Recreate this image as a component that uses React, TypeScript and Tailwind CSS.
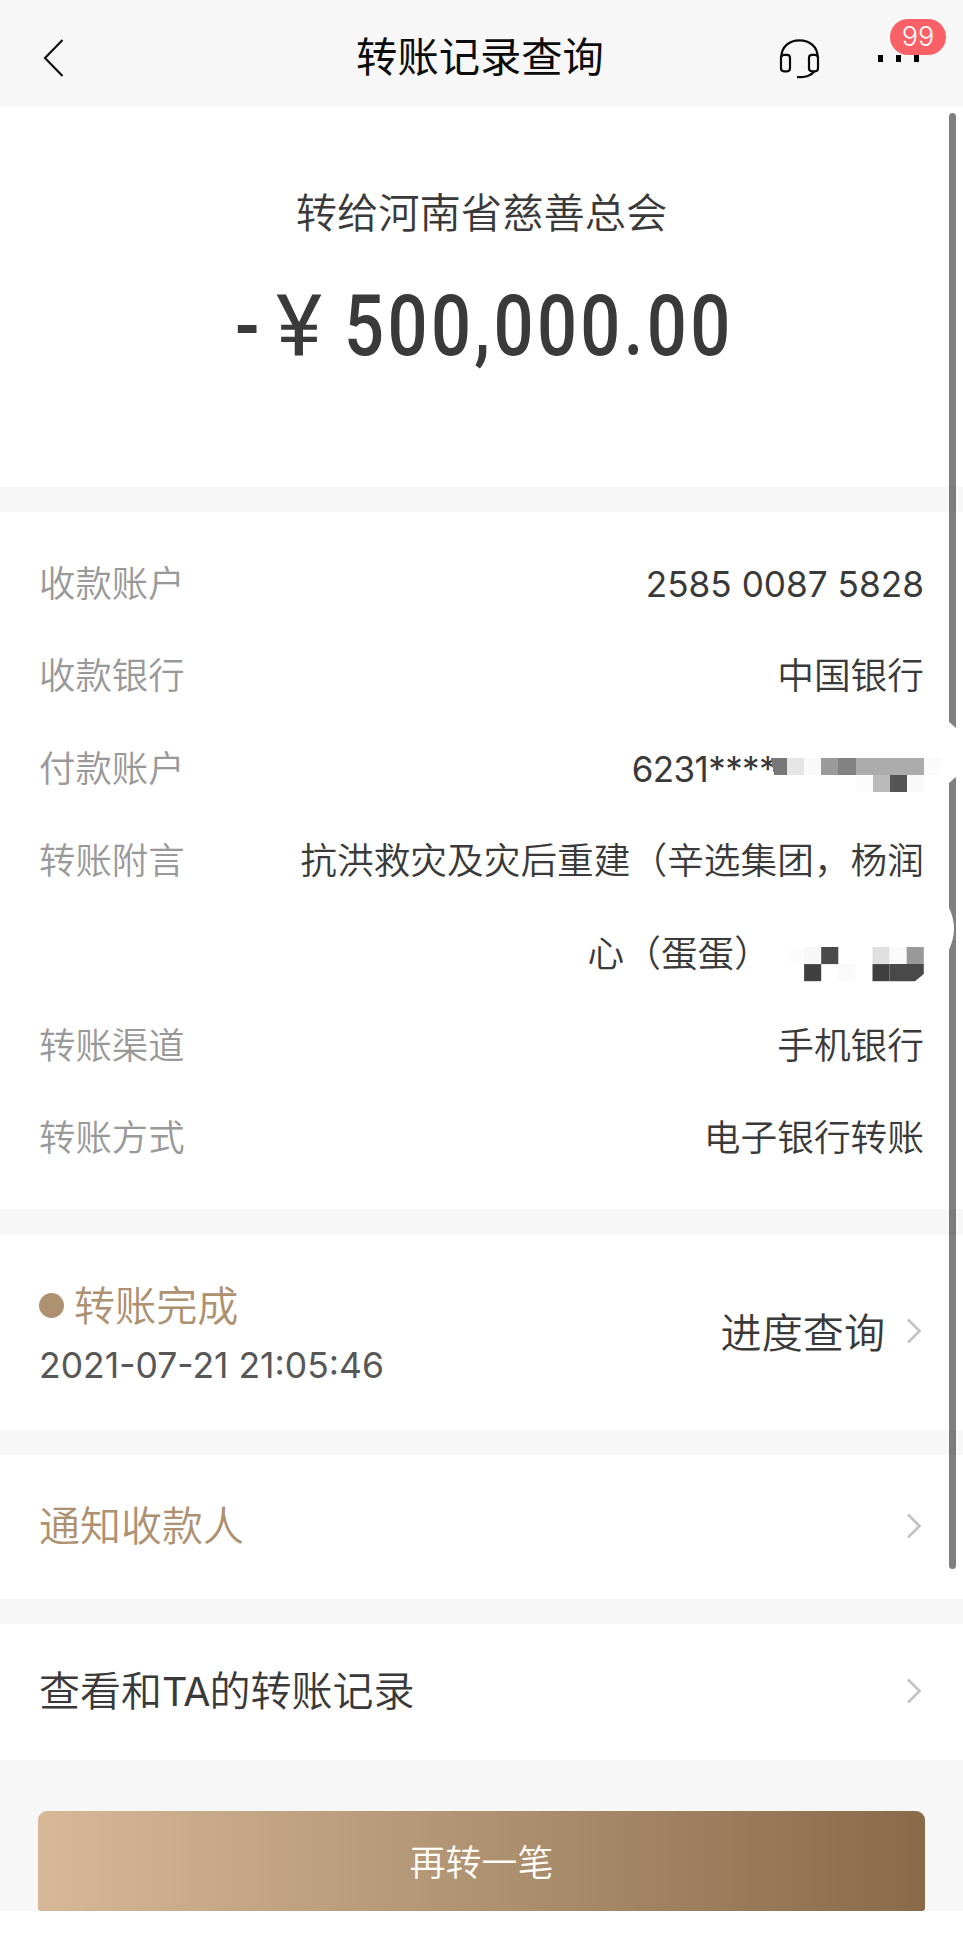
import React from 'react';

interface DetailRowProps {
  label: string;
  children: React.ReactNode;
}

interface Tile {
  x: number;
  y: number;
  w?: number;
  fill: string;
}

const TILE = 17.1;

const accountTiles: Tile[] = [
  { x: 1, y: 0, fill: '#e5e5e5' },
  { x: 2, y: 0, fill: '#f9f9f9' },
  { x: 3, y: 0, fill: '#9b9b9b' },
  { x: 4, y: 0, fill: '#828282' },
  { x: 5, y: 0, w: 4, fill: '#acacac' },
  { x: 9, y: 0, fill: '#fbfbfb' },
  { x: 5, y: 1, fill: '#fcfcfc' },
  { x: 6, y: 1, fill: '#bababa' },
  { x: 7, y: 1, fill: '#555555' },
  { x: 8, y: 1, fill: '#f9f9f9' },
];

const remarkTiles: Tile[] = [
  { x: 0, y: 0, fill: '#fcfcfc' },
  { x: 1, y: 0, fill: '#f7f7f7' },
  { x: 2, y: 0, fill: '#4a4a4a' },
  { x: 5, y: 0, fill: '#e0e0e0' },
  { x: 6, y: 0, fill: '#fafafa' },
  { x: 7, y: 0, fill: '#999999' },
  { x: 1, y: 1, fill: '#404040' },
  { x: 3, y: 1, fill: '#fafafa' },
  { x: 5, y: 1, fill: '#3f3f3f' },
];

const Tiles: React.FC<{ tiles: Tile[] }> = ({ tiles }) => (
  <>
    {tiles.map((t) => (
      <rect
        key={`${t.x}-${t.y}`}
        x={t.x * TILE}
        y={t.y * TILE}
        width={(t.w ?? 1) * TILE}
        height={TILE}
        fill={t.fill}
      />
    ))}
  </>
);

const Chevron = () => (
  <svg width="18" height="28" viewBox="0 0 18 28" fill="none" stroke="#c4c4c4" strokeWidth="2.8" className="shrink-0 mb-[3px]">
    <path d="M2 2.5 L13.5 14 L2 25.5" />
  </svg>
);

const Headset = () => (
  <svg width="42" height="42" viewBox="0 0 42 42" fill="none" stroke="#0a0a0a" strokeWidth="2.2">
    <path d="M2.4 19 C2.4 9 10 2.3 20.5 2.3 C31 2.3 38.6 9 38.6 19" />
    <rect x="2" y="16.8" width="9" height="16.5" rx="3" />
    <rect x="30" y="16.8" width="9" height="16.5" rx="3" />
    <path d="M35.5 33 C32 38 27 39.2 18 39.2" />
  </svg>
);

const DetailRow: React.FC<DetailRowProps> = ({ label, children }) => (
  <div className="flex justify-between">
    <span className="text-[#999999] text-[36.4px]">{label}</span>
    <span className="relative text-right">{children}</span>
  </div>
);

const App: React.FC = () => {
  return (
    <div className="relative w-full h-[1948px] overflow-hidden bg-white text-[#3a3a3a] font-['Inter','Noto_Sans_CJK_SC',sans-serif] font-[350]">
      {/* Header */}
      <header className="h-[107px] bg-[#f7f7f7] flex items-center justify-between pl-[42px] pr-[44px] pb-px">
        <svg width="24" height="40" viewBox="0 0 24 40" fill="none" stroke="#111" strokeWidth="2.2" className="mt-[10px]">
          <path d="M20.5 2 L3 20 L20.5 38" />
        </svg>
        <h1 className="text-[41.3px] leading-none text-[#0c0c0c] font-normal ml-[73px] mt-[10px] -mr-[42px] flex-1 text-center">转账记录查询</h1>
        <div className="flex items-center gap-[57px] mt-[11px]">
          <Headset />
          <div className="relative flex gap-[13px]">
            <i className="relative z-10 w-[5px] h-[7px] bg-black" />
            <i className="relative z-10 w-[5px] h-[7px] bg-black" />
            <i className="relative z-10 w-[5px] h-[7px] bg-black" />
            <span className="absolute left-[12px] -top-[36px] w-[56px] h-[36px] rounded-full bg-[#fa6166] text-white text-[27px] leading-[36px] text-center font-light">99</span>
          </div>
        </div>
      </header>

      {/* Amount */}
      <section className="h-[380px] flex flex-col items-center pt-[81px]">
        <p className="text-[41.3px] leading-[50px]">转给河南省慈善总会</p>
        <div className="flex items-baseline h-[100px] mt-[38px] -ml-[3px] font-['Roboto',sans-serif] font-medium text-[86px] leading-[100px] whitespace-pre">
          <span className="w-[41px] inline-block origin-left scale-x-[0.84]">-</span>
          <span className="w-[68px] inline-block origin-left scale-x-[1.02] font-normal">¥</span>
          <span className="w-[382px] inline-block origin-left scale-x-[0.82] tracking-[4.1px]">500,000.00</span>
        </div>
      </section>

      <div className="h-[25px] bg-[#f7f7f7]" />

      {/* Transfer details */}
      <section className="h-[697px] pt-[26px] px-[39px] text-[36.7px] leading-[92.4px]">
        <DetailRow label="收款账户">
          <span className="text-[35.2px] font-normal">2585 0087 5828</span>
        </DetailRow>
        <DetailRow label="收款银行">中国银行</DetailRow>
        <DetailRow label="付款账户">
          <span className="text-[35px] font-normal tracking-[-0.6px] pr-[148px]">6231****</span>
          <svg width="172" height="35" viewBox="0 0 172 35" className="absolute -right-[18px] top-[35px]" shapeRendering="crispEdges">
            <path d="M1 0 H17.1 V17.1 H4 Z" fill="#777777" />
            <Tiles tiles={accountTiles} />
          </svg>
        </DetailRow>
        <DetailRow label="转账附言">
          抗洪救灾及灾后重建（辛选集团，杨润
          <br />
          <span className="pr-[153px]">心（蛋蛋）</span>
          <svg width="137" height="35" viewBox="0 0 137 35" className="absolute right-0 bottom-[18px]">
            <Tiles tiles={remarkTiles} />
            <path d="M102.6 17.1 H136.8 V27 L128 34.2 H102.6 Z" fill="#494949" />
          </svg>
        </DetailRow>
        <DetailRow label="转账渠道">手机银行</DetailRow>
        <DetailRow label="转账方式">电子银行转账</DetailRow>
      </section>

      <div className="h-[26px] bg-[#f7f7f7]" />

      {/* Status */}
      <section className="h-[195px] px-[39px] flex items-center justify-between">
        <div className="pt-[6px]">
          <div className="flex items-center gap-[10px] text-[#ad9171] text-[41.1px] leading-[60px]">
            <i className="w-[25px] h-[25px] rounded-full bg-[#ad9171]" />
            转账完成
          </div>
          <p className="text-[35.5px] font-normal leading-[60px] text-[#575757]">2021-07-21 21:05:46</p>
        </div>
        <div className="flex items-center gap-[21px] text-[41.1px] leading-[60px]">
          进度查询
          <Chevron />
        </div>
      </section>

      <div className="h-[25px] bg-[#f7f7f7]" />

      <section className="h-[144px] px-[39px] flex items-center justify-between text-[41px] text-[#ad9171]">
        通知收款人
        <Chevron />
      </section>

      <div className="h-[25px] bg-[#f7f7f7]" />

      <section className="h-[136px] px-[39px] flex items-center justify-between text-[41px]">
        <span>
          查看和<span className="text-[39.5px] font-normal tracking-[-1px]">TA</span>的转账记录
        </span>
        <Chevron />
      </section>

      {/* Bottom action */}
      <footer className="h-[151px] bg-[#f7f7f7] px-[38px] pt-[51px]">
        <button className="block w-full h-[100px] rounded-t-[9px] rounded-b-[3px] bg-linear-to-r from-[#d7b999] via-[#af9271] to-[#896b4a] text-[#fffdf8] text-[36px] leading-[104px]">
          再转一笔
        </button>
      </footer>

      {/* Scrollbar, partly covered by the erased spots */}
      <div className="absolute left-[949px] top-[113px] w-[7px] h-[1456px] rounded-full bg-black/50" />
      <svg width="14" height="240" viewBox="0 0 14 240" className="absolute left-[948px] top-[720px]" fill="#fff">
        <path d="M0 1 L9 9 V56 L0 64 Z" />
        <path d="M0 186 Q12 208 0 232 Z" />
      </svg>
    </div>
  );
};

export default App;
